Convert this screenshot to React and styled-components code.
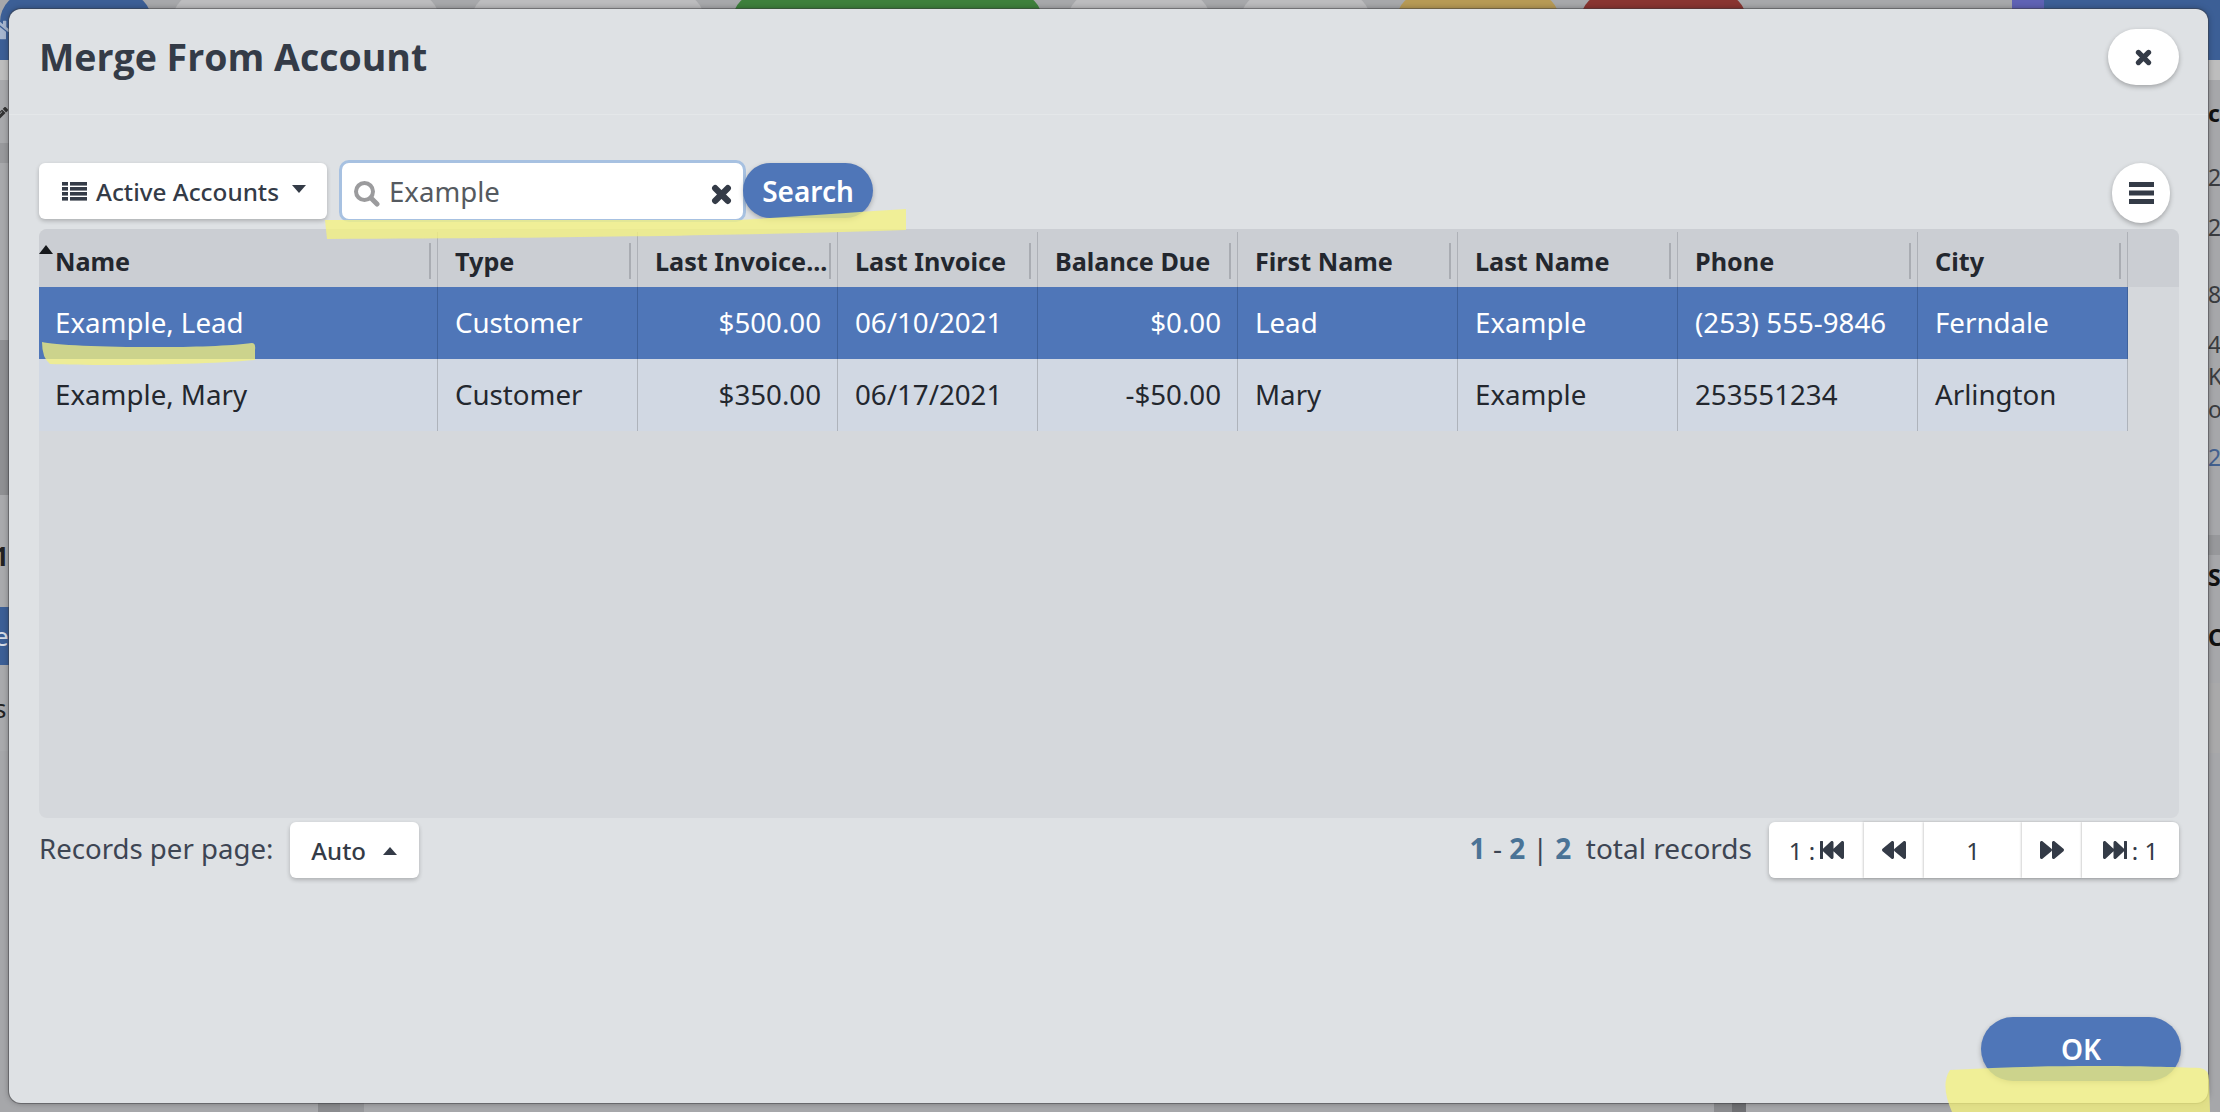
import React from "react";
import styled, { createGlobalStyle } from "styled-components";
import { FaFastBackward, FaBackward, FaForward, FaFastForward, FaPencilAlt, FaHome } from "react-icons/fa";

const BLUE = "#4f76b8";
const INK = "#343b47";

const Global = createGlobalStyle`
  html, body { margin: 0; padding: 0; width: 2220px; height: 1112px; overflow: hidden; }
  body { font-family: "Noto Sans", "Open Sans", sans-serif; color: ${INK}; }
  * { box-sizing: border-box; }
`;

const Page = styled.div`
  position: relative;
  width: 2220px;
  height: 1112px;
  overflow: hidden;
  background: #a6a7aa;
  display: flex;
  flex-direction: column;
`;

/* dimmed application behind the dialog */
const TopBar = styled.div`
  flex: none;
  height: 68px;
  display: flex;
  justify-content: flex-start;
  background: #a7a8ab;
  margin-top: -8px;
`;
const Pill = styled.div`
  flex: none;
  height: 68px;
  width: ${(p) => p.$w}px;
  margin-left: ${(p) => p.$ml || 0}px;
  background: ${(p) => p.$c};
  border-radius: ${(p) => (p.$square ? "0" : "30px 30px 0 0")};
  overflow: hidden;
  display: flex;
  color: rgba(255, 255, 255, 0.55);
`;
const Accent = styled.div`
  width: 32px;
  height: 100%;
  background: #5f62b4;
`;
const Middle = styled.div`
  flex: 1;
  display: flex;
  justify-content: space-between;
  min-height: 0;
`;
const Edge = styled.div`
  width: 12px;
  display: flex;
  flex-direction: column;
  overflow: hidden;
`;
const Band = styled.div`
  flex: none;
  height: ${(p) => p.$h}px;
  background: ${(p) => p.$c};
  font-size: 26px;
  font-weight: ${(p) => p.$w || 400};
  line-height: ${(p) => p.$h}px;
  color: ${(p) => p.$t || "#222"};
  margin-left: ${(p) => p.$shift || 0}px;
  margin-top: ${(p) => p.$mt || 0}px;
  white-space: nowrap;
  overflow: hidden;
`;
const EdgeText = styled.div`
  flex: none;
  height: 30px;
  margin-top: ${(p) => p.$mt}px;
  line-height: 30px;
  font-size: 23px;
  font-weight: ${(p) => p.$w || 400};
  color: ${(p) => p.$t || "#3a3c40"};
  white-space: nowrap;
`;
const Spacer = styled.div`
  flex: 1;
`;
const BottomBar = styled.div`
  flex: none;
  height: 9px;
  display: flex;
`;
const Patch = styled.div`
  height: 100%;
  width: ${(p) => p.$w}px;
  margin-left: ${(p) => p.$ml}px;
  background: ${(p) => p.$c};
`;

/* dialog */
const Modal = styled.div`
  position: absolute;
  left: 9px;
  top: 9px;
  width: 2199px;
  height: 1094px;
  background: #dee1e4;
  border-radius: 12px;
  box-shadow: 0 0 0 1px rgba(60, 60, 64, 0.45), 0 0 6px rgba(0, 0, 0, 0.35);
  display: flex;
  flex-direction: column;
`;
const Header = styled.header`
  flex: none;
  height: 106px;
  padding: 20px 29px 0 30px;
  border-bottom: 1px solid #e4e7e9;
  display: flex;
  justify-content: space-between;
  align-items: flex-start;
`;
const Title = styled.h1`
  margin: 0;
  font-family: "Open Sans", sans-serif;
  font-size: 37.5px;
  line-height: 55px;
  font-weight: 700;
  color: ${INK};
`;
const RoundButton = styled.button`
  border: 0;
  padding: 0;
  background: #fff;
  width: ${(p) => p.$w}px;
  height: ${(p) => p.$h}px;
  border-radius: ${(p) => p.$h / 2}px;
  margin-left: ${(p) => (p.$auto ? "auto" : "0")};
  margin-right: ${(p) => p.$mr || 0}px;
  box-shadow: 0 2px 5px rgba(0, 0, 0, 0.28);
  color: ${INK};
  display: flex;
  align-items: center;
  justify-content: center;
`;
const Body = styled.div`
  flex: 1;
  min-height: 0;
  padding: 48px 29px 22px 30px;
  display: flex;
  flex-direction: column;
`;
const Toolbar = styled.div`
  flex: none;
  height: 66px;
  display: flex;
  align-items: flex-start;
`;
const WhiteButton = styled.button`
  border: 0;
  background: #fff;
  border-radius: 6px;
  box-shadow: 0 2px 4px rgba(0, 0, 0, 0.22);
  height: 56px;
  width: ${(p) => p.$w}px;
  margin-left: ${(p) => p.$ml || 0}px;
  padding: 0 0 0 ${(p) => p.$pad || 0}px;
  display: flex;
  align-items: center;
  font-family: inherit;
  font-size: ${(p) => p.$fs || 24}px;
  font-weight: 500;
  color: ${INK};
  flex: none;
  white-space: nowrap;
`;
const ListSvg = styled.svg`
  width: 25px;
  height: 19px;
  margin-right: 9px;
  flex: none;
`;
const Caret = styled.span`
  flex: none;
  width: 0;
  height: 0;
  margin-left: ${(p) => p.$ml}px;
  margin-top: ${(p) => (p.$up ? 2 : -4)}px;
  border-left: 7.5px solid transparent;
  border-right: 7.5px solid transparent;
  ${(p) => (p.$up ? `border-bottom: 8px solid ${INK};` : `border-top: 8px solid ${INK};`)}
`;
const SearchBox = styled.div`
  flex: none;
  width: 407px;
  height: 62px;
  margin: -3px 0 0 12px;
  border: 3px solid #a7c1e1;
  border-radius: 10px;
  background: #fff;
  display: flex;
  align-items: center;
  padding: 0 11px 0 11px;
  font-size: 27.6px;
  color: #555a60;
`;
const SearchSvg = styled.svg`
  width: 27px;
  height: 27px;
  margin: 4px 9px 0 0;
  flex: none;
`;
const SearchValue = styled.span`
  flex: 1;
  line-height: 56px;
`;
const CrossSvg = styled.svg`
  width: ${(p) => p.$s}px;
  height: ${(p) => p.$s}px;
  margin-top: ${(p) => p.$mt || 0}px;
  flex: none;
`;
const Primary = styled.button`
  position: relative;
  border: 0;
  background: ${BLUE};
  color: #fff;
  font-family: inherit;
  font-weight: 600;
  font-size: 28px;
  flex: none;
  width: ${(p) => p.$w}px;
  height: ${(p) => p.$h}px;
  border-radius: ${(p) => p.$h / 2}px;
  margin-left: ${(p) => p.$ml || 0}px;
  box-shadow: 0 2px 5px rgba(0, 0, 0, 0.25);
  padding: 0;
`;
const BarsSvg = styled.svg`
  width: 25px;
  height: 22px;
`;

const Table = styled.div`
  flex: none;
  height: 589px;
  border-radius: 8px;
  background: #d5d8dc;
  overflow: hidden;
  display: flex;
  flex-direction: column;
`;
const Row = styled.div`
  flex: none;
  display: flex;
  height: ${(p) => p.$h}px;
  width: 2089px;
  background: ${(p) => p.$bg};
  color: ${(p) => p.$fg};
`;
const HeadRow = styled.div`
  flex: none;
  display: flex;
  height: 58px;
  padding-top: 3px;
  background: #cbced3;
`;
const HeadCell = styled.div`
  position: relative;
  flex: none;
  width: ${(p) => p.$w}px;
  padding-left: ${(p) => (p.$first ? 16 : 17)}px;
  border-right: 1px solid #aeb1b7;
  font-size: 25.2px;
  font-weight: 700;
  color: #23272e;
  line-height: 58px;
  white-space: nowrap;
`;
const SortMark = styled.span`
  position: absolute;
  left: 0;
  top: 13px;
  width: 0;
  height: 0;
  border-left: 7px solid transparent;
  border-right: 7px solid transparent;
  border-bottom: 9px solid #16181c;
`;
const Resizer = styled.span`
  position: absolute;
  right: 6px;
  top: 11px;
  height: 36px;
  width: 2px;
  background: #a9acb2;
`;
const Cell = styled.div`
  flex: none;
  width: ${(p) => p.$w}px;
  padding: 0 16px 0 ${(p) => (p.$first ? 16 : 17)}px;
  border-right: 1px solid ${(p) => p.$line};
  font-size: 27.7px;
  line-height: ${(p) => p.$h - 2}px;
  text-align: ${(p) => (p.$right ? "right" : "left")};
  white-space: nowrap;
`;

const Footer = styled.div`
  flex: none;
  margin-top: 4px;
  height: 56px;
  display: flex;
  align-items: flex-start;
`;
const FootText = styled.span`
  font-size: ${(p) => p.$s || 28}px;
  line-height: 53px;
  color: #3d4553;
  white-space: nowrap;
`;
const Stat = styled.b`
  color: #4a7396;
  font-weight: 700;
`;
const Summary = styled(FootText)`
  margin-left: auto;
  margin-right: 17px;
`;
const Pager = styled.div`
  flex: none;
  display: flex;
  height: 56px;
  border-radius: 6px;
  box-shadow: 0 2px 4px rgba(0, 0, 0, 0.25);
`;
const PagerItem = styled.div`
  width: ${(p) => p.$w}px;
  height: 56px;
  background: #fff;
  box-shadow: ${(p) => (p.$first ? "none" : "-1px 0 2px rgba(0,0,0,.18)")};
  border-radius: ${(p) => (p.$first ? "6px 0 0 6px" : p.$last ? "0 6px 6px 0" : "0")};
  display: flex;
  align-items: center;
  justify-content: center;
  gap: 5px;
  font-size: 24px;
  color: ${INK};
`;
const PagerIcon = styled.span`
  display: inline-flex;
  font-size: 24px;
`;
const Actions = styled.div`
  margin-top: auto;
  display: flex;
  justify-content: flex-end;
  margin-right: -2px;
`;
const Marker = styled.svg`
  position: absolute;
  left: 0;
  top: 0;
  width: 2220px;
  height: 1112px;
  pointer-events: none;
`;

const COLS = [399, 200, 200, 200, 200, 220, 220, 240, 210];
const HEAD = ["Name", "Type", "Last Invoice...", "Last Invoice", "Balance Due", "First Name", "Last Name", "Phone", "City"];
const RIGHT = [2, 4];
const ROWS = [
  ["Example, Lead", "Customer", "$500.00", "06/10/2021", "$0.00", "Lead", "Example", "(253) 555-9846", "Ferndale"],
  ["Example, Mary", "Customer", "$350.00", "06/17/2021", "-$50.00", "Mary", "Example", "253551234", "Arlington"],
];

const Cross = ({ size, mt }) => (
  <CrossSvg $s={size} $mt={mt} viewBox="0 0 20 20">
    <path d="M4 4 L16 16 M16 4 L4 16" stroke={INK} strokeWidth="6" strokeLinecap="round" />
  </CrossSvg>
);

export default function App() {
  return (
    <Page>
      <Global />
      <TopBar>
        <Pill $w={152} $c="#3c5f96"><FaHome style={{ marginLeft: -14, marginTop: 26, fontSize: 24 }} /></Pill>
        <Pill $w={268} $ml={20} $c="#bcbcbe" />
        <Pill $w={234} $ml={31} $c="#bcbcbe" />
        <Pill $w={311} $ml={27} $c="#3e803c" />
        <Pill $w={144} $ml={24} $c="#bcbcbe" />
        <Pill $w={131} $ml={29} $c="#bcbcbe" />
        <Pill $w={164} $ml={25} $c="#b79a55" />
        <Pill $w={167} $ml={20} $c="#893531" />
        <Pill $w={265} $square $c="#a7a8ab" />
        <Pill $w={210} $square $c="#3c5f96"><Accent /></Pill>
      </TopBar>
      <Middle>
        <Edge>
          <Band $h={20} $c="#bdbdbd" />
          <Band $h={63} $c="#a8a9ac"><FaPencilAlt style={{ marginLeft: -6, marginTop: 22, fontSize: 14, color: "#333" }} /></Band>
          <Band $h={20} $c="#98999c" />
          <Band $h={177} $c="#a8a9ac" />
          <Band $h={155} $c="#8f9093" />
          <Band $h={10} $c="#a9aaad" />
          <Band $h={102} $c="#a9aaad" $w={700} $shift={-6}>1</Band>
          <Band $h={58} $c="#3c5f96" $t="#d8dde6" $shift={-6}>e</Band>
          <Band $h={86} $c="#a9aaad" $shift={-6}>s</Band>
          <Spacer />
        </Edge>
        <Edge>
          <Band $h={20} $c="#bdbdbd" />
          <EdgeText $mt={18} $w={700} $t="#111">c</EdgeText>
          <EdgeText $mt={34}>2</EdgeText>
          <EdgeText $mt={20}>2</EdgeText>
          <EdgeText $mt={37}>8</EdgeText>
          <EdgeText $mt={20}>4</EdgeText>
          <EdgeText $mt={2}>Ki</EdgeText>
          <EdgeText $mt={3}>o</EdgeText>
          <EdgeText $mt={18} $t="#43618f">2</EdgeText>
          <Band $h={20} $c="#97989b" $mt={63} />
          <EdgeText $mt={7} $w={700} $t="#111">S</EdgeText>
          <EdgeText $mt={30} $w={700} $t="#111">C</EdgeText>
          <Band $h={70} $c="#a9a9aa" $mt={31} />
          <Spacer />
        </Edge>
      </Middle>
      <BottomBar>
        <Patch $ml={318} $w={22} $c="#8a8b8e" />
        <Patch $ml={0} $w={24} $c="#96979a" />
        <Patch $ml={1350} $w={18} $c="#8a8b8e" />
        <Patch $ml={0} $w={14} $c="#6f7073" />
      </BottomBar>

      <Modal>
        <Header>
          <Title>Merge From Account</Title>
          <RoundButton $w={71} $h={56}><Cross size={17} /></RoundButton>
        </Header>
        <Body>
          <Toolbar>
            <WhiteButton $w={288} $pad={23} $fs={24.3}>
              <ListSvg viewBox="0 0 25 19" fill={INK}>
                <rect x="0" y="0" width="6" height="3.6" />
                <rect x="8" y="0" width="17" height="3.6" />
                <rect x="0" y="5" width="6" height="3.6" />
                <rect x="8" y="5" width="17" height="3.6" />
                <rect x="0" y="10" width="6" height="3.6" />
                <rect x="8" y="10" width="17" height="3.6" />
                <rect x="0" y="15" width="6" height="3.6" />
                <rect x="8" y="15" width="17" height="3.6" />
              </ListSvg>
              Active Accounts
              <Caret $ml={13} />
            </WhiteButton>
            <SearchBox>
              <SearchSvg viewBox="0 0 27 27" fill="none" stroke="#9b9b9d">
                <circle cx="11.5" cy="11.5" r="8.5" strokeWidth="4" />
                <path d="M18 18 L24 24" strokeWidth="5" strokeLinecap="round" />
              </SearchSvg>
              <SearchValue>Example</SearchValue>
              <Cross size={21} mt={6} />
            </SearchBox>
            <Primary $w={130} $h={55} $ml={-3}>Search</Primary>
            <RoundButton $auto $mr={9} $w={58} $h={60}>
              <BarsSvg viewBox="0 0 25 22" fill={INK}>
                <rect x="0" y="0" width="25" height="5" />
                <rect x="0" y="8.5" width="25" height="5" />
                <rect x="0" y="17" width="25" height="5" />
              </BarsSvg>
            </RoundButton>
          </Toolbar>
          <Table>
            <HeadRow>
              {HEAD.map((h, i) => (
                <HeadCell key={h} $w={COLS[i]} $first={i === 0}>
                  {i === 0 && <SortMark />}
                  {h}
                  <Resizer />
                </HeadCell>
              ))}
            </HeadRow>
            {ROWS.map((r, ri) => (
              <Row key={r[0]} $h={72} $bg={ri === 0 ? BLUE : "#d1d8e3"} $fg={ri === 0 ? "#fff" : "#23272e"}>
                {r.map((c, i) => (
                  <Cell key={i} $w={COLS[i]} $h={72} $first={i === 0} $right={RIGHT.includes(i)} $line={ri === 0 ? "#3f629c" : "#aeb3bb"}>
                    {c}
                  </Cell>
                ))}
              </Row>
            ))}
          </Table>
          <Footer>
            <FootText $s={27.6}>Records per page:</FootText>
            <WhiteButton $w={129} $ml={17} $pad={21}>
              Auto
              <Caret $up $ml={17} />
            </WhiteButton>
            <Summary>
              <Stat>1</Stat> - <Stat>2</Stat> | <Stat>2</Stat>&nbsp; total records
            </Summary>
            <Pager>
              <PagerItem $w={95} $first>1 :<PagerIcon><FaFastBackward /></PagerIcon></PagerItem>
              <PagerItem $w={60}><PagerIcon><FaBackward /></PagerIcon></PagerItem>
              <PagerItem $w={98}>1</PagerItem>
              <PagerItem $w={60}><PagerIcon><FaForward /></PagerIcon></PagerItem>
              <PagerItem $w={97} $last><PagerIcon><FaFastForward /></PagerIcon>: 1</PagerItem>
            </Pager>
          </Footer>
          <Actions>
            <Primary $w={200} $h={64}>OK</Primary>
          </Actions>
        </Body>
      </Modal>

      <Marker viewBox="0 0 2220 1112">
        <g fill="rgb(245,243,125)" fillOpacity="0.75">
          <path d="M325 220 L740 220 C800 216 860 212 906 209 L906 230 C800 234 600 238 327 239 Z" />
          <path d="M42 342 C60 347 200 350 252 343 Q256 343 255 350 L255 360 C200 365 100 366 50 364 Q42 358 42 342 Z" />
          <path d="M1950 1070 C2050 1064 2150 1066 2200 1068 Q2209 1069 2209 1080 L2210 1112 L1952 1112 Q1940 1085 1950 1070 Z" />
        </g>
      </Marker>
    </Page>
  );
}
